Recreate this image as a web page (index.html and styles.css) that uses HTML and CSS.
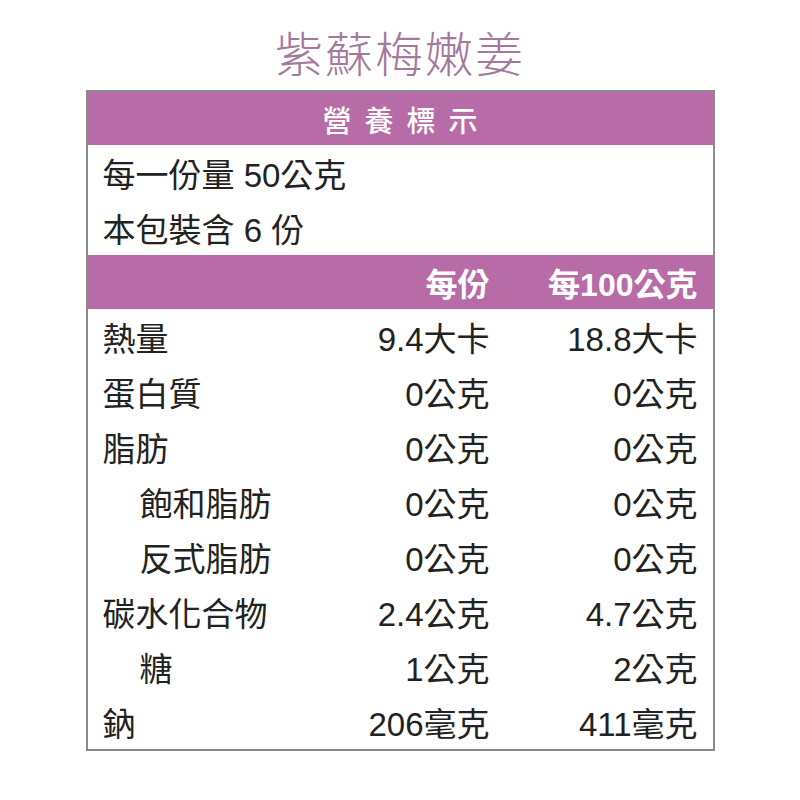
FILE: index.html
```html
<!DOCTYPE html>
<html lang="zh-Hant">
<head>
<meta charset="utf-8">
<link rel="stylesheet" href="styles.css">
</head>
<body>
<div class="page">
  <h1 class="title">紫蘇梅嫩姜</h1>
  <div class="label">
    <div class="bar bar-title">營養標示</div>
    <div class="row info">每一份量 50公克</div>
    <div class="row info">本包裝含 6 份</div>
    <div class="bar bar-cols">
      <span class="name"></span>
      <span class="v1">每份</span>
      <span class="v2">每100公克</span>
    </div>
    <div class="row"><span class="name">熱量</span><span class="v1">9.4大卡</span><span class="v2">18.8大卡</span></div>
    <div class="row"><span class="name">蛋白質</span><span class="v1">0公克</span><span class="v2">0公克</span></div>
    <div class="row"><span class="name">脂肪</span><span class="v1">0公克</span><span class="v2">0公克</span></div>
    <div class="row"><span class="name sub">飽和脂肪</span><span class="v1">0公克</span><span class="v2">0公克</span></div>
    <div class="row"><span class="name sub">反式脂肪</span><span class="v1">0公克</span><span class="v2">0公克</span></div>
    <div class="row"><span class="name">碳水化合物</span><span class="v1">2.4公克</span><span class="v2">4.7公克</span></div>
    <div class="row"><span class="name sub">糖</span><span class="v1">1公克</span><span class="v2">2公克</span></div>
    <div class="row"><span class="name">鈉</span><span class="v1">206毫克</span><span class="v2">411毫克</span></div>
  </div>
</div>
</body>
</html>
```
FILE: styles.css
```css
html, body {
  margin: 0;
  padding: 0;
  background: #ffffff;
}
.page {
  width: 800px;
  height: 800px;
  font-family: "Liberation Sans", "Noto Sans CJK TC", sans-serif;
  color: #222222;
}
.title {
  margin: 0;
  height: 90px;
  display: flex;
  align-items: center;
  justify-content: center;
  padding-top: 12px;
  box-sizing: border-box;
  font-family: "Noto Sans CJK TC", sans-serif;
  font-weight: 300;
  font-size: 48px;
  letter-spacing: 2px;
  color: #a5789e;
}
.label {
  width: 629px;
  margin: 0 auto;
  border: 2px solid #8a8a8a;
  box-sizing: border-box;
}
.bar {
  background: #b76ca7;
  color: #ffffff;
  height: 53px;
  display: flex;
  align-items: center;
}
.bar-title {
  justify-content: center;
  font-family: "Noto Sans CJK TC", sans-serif;
  font-size: 29px;
  font-weight: 500;
  letter-spacing: 13px;
  padding-left: 13px;
}
.bar-cols {
  height: 54px;
  font-weight: bold;
  font-size: 32px;
  padding: 0 15px 0 15px;
}
.row {
  height: 55px;
  display: flex;
  align-items: center;
  font-size: 33px;
  padding: 0 15px 0 15px;
}
.name {
  flex: 1;
}
.name.sub {
  padding-left: 37px;
}
.v1 {
  width: 200px;
  text-align: right;
}
.v2 {
  width: 208px;
  text-align: right;
}
```
